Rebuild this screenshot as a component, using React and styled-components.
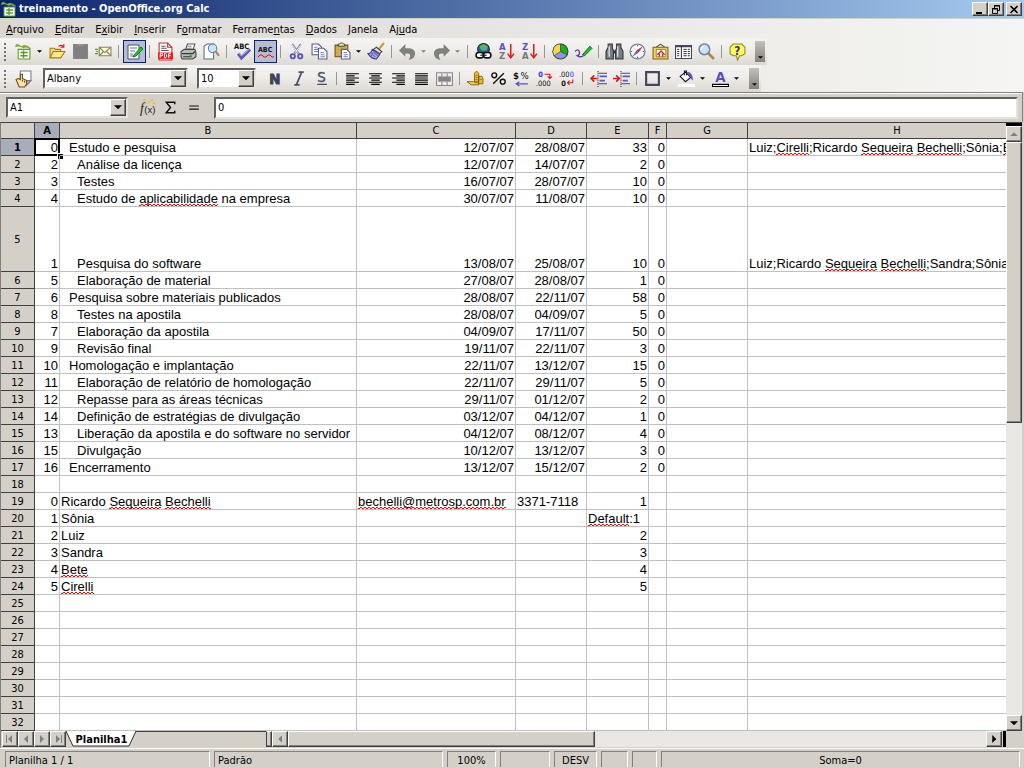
import { Fragment } from "react";
import styled, { createGlobalStyle, css } from "styled-components";

const GlobalStyle = createGlobalStyle`
  *, *::before, *::after {
    box-sizing: border-box;
  }

  body {
    margin: 0;
    background: #d4d0c8;
    color: #000;
    font-family: "DejaVu Sans Condensed", "DejaVu Sans", sans-serif;
    font-size: 11px;
  }

  button, input, select {
    font: inherit;
    color: inherit;
    margin: 0;
    padding: 0;
    border: 0;
    border-radius: 0;
    background: none;
    outline: none;
  }
`;

const raised = css`
  background: #d4d0c8;
  border: 1px solid;
  border-color: #fff #404040 #404040 #fff;
  box-shadow: inset -1px -1px 0 #808080;
`;

const sunken = css`
  background: #fff;
  border: 2px solid;
  border-color: #606060 #e4e2dc #e4e2dc #606060;
`;

const Window = styled.div`
  display: flex;
  flex-direction: column;
  height: 100vh;
  overflow: hidden;
`;

const TitleBar = styled.header`
  display: flex;
  align-items: center;
  flex: none;
  height: 18px;
  padding: 0 2px 0 1px;
  background: linear-gradient(90deg, #0a246a, #a6caf0);

  h1 {
    flex: 1;
    margin: 0 0 0 2px;
    color: #fff;
    font-size: 11px;
    line-height: 18px;
    font-weight: 700;
  }
`;

const CaptionButton = styled.button`
  ${raised}
  display: flex;
  align-items: center;
  justify-content: center;
  width: 16px;
  height: 14px;
  margin-left: ${(p) => (p.$apart ? "2px" : "0")};
`;

const Dock = styled.div`
  flex: none;
  border-top: 1px solid #d4d0c8;
  background: linear-gradient(90deg, #dad7d0, #f5f5f3);
`;

const MenuBar = styled.nav`
  display: flex;
  gap: 11px;
  height: 19px;
  padding-left: 6px;
  line-height: 21px;

  a {
    color: #000;
    text-decoration: none;
  }
`;

const ToolbarRow = styled.div`
  display: flex;
`;

const Toolbar = styled.div`
  display: flex;
  align-items: center;
  height: 27px;
  padding-right: 2px;
  background: linear-gradient(#f6f4f3, #f0eeec 40%, #dcd9d3);
`;

const Grip = styled.span`
  width: 2px;
  height: 18px;
  margin: 0 6px 0 4px;
  background: repeating-linear-gradient(#77746e 0 2px, transparent 2px 4px);
`;

const ToolButton = styled.button`
  display: flex;
  align-items: center;
  justify-content: center;
  width: 23px;
  height: 23px;
  ${(p) =>
    p.$active &&
    css`
      background: #b6bdd2;
      border: 1px solid #0a246a;
    `}

  svg {
    flex: none;
    overflow: visible;
  }
`;

const DropButton = styled.button`
  display: flex;
  align-items: center;
  width: 11px;
  height: 23px;
  padding-left: 2px;
  color: ${(p) => (p.$muted ? "#808080" : "#000")};
`;

const Separator = styled.span`
  width: 1px;
  height: 13px;
  margin: 0 4px 0 3px;
  background: #9a9790;
`;

const Overflow = styled.button`
  display: flex;
  align-items: flex-end;
  justify-content: center;
  width: 10px;
  height: 21px;
  margin-left: 6px;
  padding-bottom: 3px;
  background: linear-gradient(#c4c1bb, #85827d);
`;

const Combo = styled.div`
  ${sunken}
  display: flex;
  width: ${(p) => p.$width};
  height: 21px;
  margin: ${(p) => p.$margin || "0"};

  select,
  input {
    flex: 1;
    min-width: 0;
    padding-left: 2px;
    appearance: none;
  }
`;

const ComboArrow = styled.button`
  ${raised}
  display: flex;
  align-items: center;
  justify-content: center;
  width: 16px;
`;

const FormulaBar = styled.div`
  display: flex;
  align-items: center;
  flex: none;
  height: 30px;
  margin-right: 1px;
  padding: 0 4px 0 6px;
  border-top: 1px solid #808080;
  border-right: 1px solid #808080;
  box-shadow: inset 0 1px 0 #fff;
`;

const FormulaTools = styled.div`
  display: flex;
  margin: 0 9px 0 8px;
`;

const FormulaInput = styled.input`
  ${sunken}
  flex: 1;
  min-width: 0;
  height: 22px;
  padding-left: 2px;
`;

const SheetArea = styled.main`
  display: flex;
  flex: 1;
  min-height: 0;
  margin-right: 2px;
  border-top: 1px solid #404040;
  border-left: 1px solid #808080;
`;

const GridPane = styled.div`
  flex: 1;
  min-width: 0;
  overflow: hidden;
  background: #fff;
`;

const Grid = styled.table`
  width: 100%;
  min-width: 1046px;
  table-layout: fixed;
  border-collapse: separate;
  border-spacing: 0;
`;

const HeaderCell = styled.th`
  height: ${(p) => p.$height || "17px"};
  padding: 0;
  border-right: 1px solid #404040;
  border-bottom: 1px solid #404040;
  background: ${(p) => (p.$active ? "#a8adb9" : "#d4d0c8")};
  font-weight: ${(p) => (p.$active ? 700 : 400)};
  line-height: 15px;
  text-align: center;
`;

const Cell = styled.td`
  position: relative;
  height: 17px;
  padding: 0 1px 0 ${(p) => 1 + (p.$indent || 0) * 8}px;
  border-right: 1px solid #c0c0c0;
  border-bottom: 1px solid #c0c0c0;
  font-family: "Liberation Sans", Arial, sans-serif;
  font-size: 13px;
  line-height: 14px;
  text-align: ${(p) => (p.$right ? "right" : "left")};
  vertical-align: bottom;
  white-space: nowrap;
`;

const Cursor = styled.span`
  position: absolute;
  inset: -1px;
  border: 2px solid #000;

  &::after {
    content: "";
    position: absolute;
    right: -5px;
    bottom: -5px;
    width: 6px;
    height: 6px;
    border: 1px solid #fff;
    border-width: 1px 0 0 1px;
    background: #000;
  }
`;

const Misspelt = styled.span`
  background:
    linear-gradient(90deg, #f00 50%, transparent 50%) 0 100% / 4px 1px repeat-x,
    linear-gradient(90deg, transparent 50%, #f00 50%) 0 calc(100% - 1px) / 4px 1px repeat-x;
`;

const VerticalScroll = styled.div`
  display: flex;
  flex-direction: column;
  width: 16px;
  border-top: 3px solid #000;
  background: #e8e7e3;
`;

const HorizontalScroll = styled.div`
  display: flex;
  flex: 1;
  background: #e8e7e3;
`;

const ScrollButton = styled.button`
  ${raised}
  display: flex;
  flex: none;
  align-items: center;
  justify-content: center;
  width: 16px;
  height: 16px;
  color: ${(p) => (p.$muted ? "#808080" : "#000")};
`;

const Track = styled.div`
  display: flex;
  flex: 1;
  flex-direction: ${(p) => (p.$vertical ? "column" : "row")};
  min-height: 0;
`;

const Thumb = styled.div`
  ${raised}
  flex: 0 0 ${(p) => p.$size};
`;

const SheetBar = styled.div`
  display: flex;
  flex: none;
  height: 17px;
  padding-left: 1px;
  margin-right: 2px;
  border-left: 1px solid #808080;
  border-bottom: 1px solid #d4d0c8;
`;

const TabStrip = styled.div`
  display: flex;
  width: 200px;
  border-top: 1px solid #404040;
`;

const SheetTab = styled.button`
  position: relative;
  height: 16px;
  width: 71px;
  margin-top: -1px;
  font-weight: 700;
  line-height: 15px;
  text-align: center;

  svg {
    position: absolute;
    inset: 0;
  }

  span {
    position: relative;
  }
`;

const Splitter = styled.div`
  ${raised}
  width: 6px;
  border-left-color: #404040;
`;

const EndStop = styled.div`
  width: 3px;
  margin-left: 1px;
  background: #000;
`;

const Corner = styled.div`
  width: 16px;
  background: #d4d0c8;
`;

const StatusBar = styled.footer`
  display: flex;
  flex: none;
  gap: 4px;
  height: 20px;
  padding: 2px 4px 1px 5px;
  border-top: 1px solid #fff;
`;

const StatusPanel = styled.div`
  flex: ${(p) => (p.$width ? `0 0 ${p.$width}` : "1")};
  padding: 0 3px;
  border-top: 1px solid #808080;
  border-left: 1px solid #808080;
  border-right: 1px solid #fff;
  line-height: 17px;
  text-align: ${(p) => (p.$center ? "center" : "left")};
`;

const Icon = ({ children, size = 17 }) => (
  <svg width={size} height={size} viewBox="0 0 16 16" fill="none" aria-hidden="true">
    {children}
  </svg>
);

const Arrow = ({ dir = "down", size = 5 }) => {
  const points = {
    down: "0,0 6,0 3,3",
    up: "0,3 6,3 3,0",
    left: "3,0 3,6 0,3",
    right: "0,0 0,6 3,3",
  }[dir];
  const tall = dir === "left" || dir === "right";
  return (
    <svg
      width={tall ? (size + 1) / 2 : size}
      height={tall ? size : (size + 1) / 2}
      viewBox={tall ? "0 0 3 6" : "0 0 6 3"}
      aria-hidden="true"
    >
      <polygon points={points} fill="currentColor" />
    </svg>
  );
};

const iconText = {
  fontFamily: "DejaVu Sans Condensed, DejaVu Sans, sans-serif",
  fontWeight: 700,
};

const CalcLogo = () => (
  <>
    <path d="M1 1q3 0 5 2q4-3 9 2l-1 1q-3-3-6-1q-4-3-8-1z" fill="#7fae3c" />
    <path d="M3 6h11v9H3z" fill="#fff" stroke="#5c9c2c" />
    <path d="M5 9h7M5 12h7M8 7v7" stroke="#5c9c2c" strokeWidth="1.4" />
  </>
);

const icons = {
  new: <CalcLogo />,
  open: (
    <>
      <path d="M1 14V5h4l1 1h5v2" fill="#f5d77a" stroke="#a37d14" />
      <path d="M1 14l3-6h11l-4 6z" fill="#ffe88d" stroke="#a37d14" />
      <path d="M9 3q3-2 5 1m0-3v3h-3" stroke="#d62020" />
    </>
  ),
  save: (
    <>
      <path d="M1 1h14v14H1z" fill="#808080" />
      <path d="M5 2h6" stroke="#a5a5a5" />
    </>
  ),
  mail: (
    <>
      <path d="M4 4h11v8H4z" fill="#fffbd0" stroke="#87835d" />
      <path d="M4 4l5 5 6-5M4 12l4-4M15 12l-4-4" stroke="#87835d" />
      <path d="M0 6h3M1 8h2M0 10h3" stroke="#5b983b" />
    </>
  ),
  edit: (
    <>
      <path d="M1 1h11v14H1z" fill="#fff" stroke="#47506f" />
      <path d="M3 4h7M3 7h5M3 10h3M3 12h4" stroke="#6870b0" />
      <path d="M7 11l7-8 2 2-7 7-3 1z" fill="#20d020" stroke="#145414" strokeWidth=".8" />
    </>
  ),
  pdf: (
    <>
      <path d="M2 0h8l4 4v12H2z" fill="#fff" stroke="#c03030" />
      <path d="M10 0v4h4" stroke="#c03030" />
      <path d="M4 3h4M4 5h5M4 7h7" stroke="#555" />
      <path d="M1 9h14v6H1z" fill="#e81818" />
      <path d="M3 14v-4h2v2H3M7 10v4h1l1-1v-2l-1-1zM11 14v-4h2M11 12h2" stroke="#fff" strokeWidth=".9" />
    </>
  ),
  print: (
    <>
      <path d="M5 7l2-6h7l-2 6z" fill="#fff" stroke="#555" />
      <path d="M1 8l3-2h10l1 3v4l-3 2H2l-1-2z" fill="#bbb" stroke="#444" />
      <path d="M2 10h10l2-2M3 13h8" stroke="#333" />
      <path d="M7 3h4M6 5h5" stroke="#888" />
      <path d="M9 12h2" stroke="#18c018" strokeWidth="1.5" />
    </>
  ),
  preview: (
    <>
      <path d="M1 3l3-2h6v14H1z" fill="#fff" stroke="#666b88" />
      <circle cx="9" cy="5" r="4" fill="#c5e7fa" stroke="#6775a0" />
      <path d="M12 8l3 4" stroke="#b68452" strokeWidth="2" />
    </>
  ),
  spell: (
    <>
      <text x="0" y="6" fontSize="7" fill="#111" style={iconText}>ABC</text>
      <path d="M4 10l3 4 8-8" stroke="#5a50c8" strokeWidth="3" />
      <path d="M5 10l2 2 7-6" stroke="#a9a6ee" />
    </>
  ),
  autoSpell: (
    <>
      <text x="0" y="8" fontSize="7" fill="#111" style={iconText}>ABC</text>
      <path d="M0 13l2-2h2l2 2h2l2-2h2l2 2h2" stroke="#f00" />
    </>
  ),
  cut: (
    <>
      <path d="M4 1l6 9M12 1l-6 9" stroke="#8c8ca8" strokeWidth="2" />
      <path d="M4 2l5 7M12 2l-5 7" stroke="#fff" strokeWidth=".8" />
      <circle cx="4.5" cy="12.5" r="2" stroke="#5a50c0" strokeWidth="1.8" />
      <circle cx="11.5" cy="12.5" r="2" stroke="#5a50c0" strokeWidth="1.8" />
    </>
  ),
  copy: (
    <>
      <path d="M1 1h6l3 3v7H1z" fill="#fff" stroke="#555c88" />
      <path d="M3 4h3M3 6h5M3 8h5" stroke="#7477c8" />
      <path d="M7 5h5l3 3v7H7z" fill="#fff" stroke="#555c88" />
      <path d="M9 9h3M9 11h4M9 13h4" stroke="#7477c8" />
    </>
  ),
  paste: (
    <>
      <path d="M1 2h12v11H1z" fill="#d2ab4f" stroke="#6b5015" />
      <path d="M4 3V1h1l1-1h2l1 1h1v2z" fill="#ece7a2" stroke="#333" strokeWidth=".8" />
      <path d="M7 6h5l3 3v6H7z" fill="#fff" stroke="#555c88" />
      <path d="M9 9h3M9 11h4M9 13h4" stroke="#7477c8" />
    </>
  ),
  brush: (
    <>
      <path d="M10 6l5-6" stroke="#d39a29" strokeWidth="2" />
      <path d="M8 4l5 4-2 2-6-4z" fill="#ddd" stroke="#444" />
      <path d="M4 6l7 5-3 4q-5 0-8-5 3 0 4-4z" fill="#aaaaf4" stroke="#404088" />
      <path d="M3 10l4 3M5 8l4 4M5 9l-2 3" stroke="#6565c0" />
    </>
  ),
  undo: <path d="M0 7l6-6v4h4q6 1 5 6-1 4-6 5l1-2q2-5-4-4v3z" fill="#808080" />,
  redo: <path d="M16 7l-6-6v4H6Q0 6 1 11q1 4 6 5l-1-2q-2-5 4-4v3z" fill="#808080" />,
  link: (
    <>
      <circle cx="8" cy="6" r="5.5" fill="#3a52b4" stroke="#223" />
      <path d="M4 3l4-2 4 2-1 4-5 0z" fill="#49bd59" />
      <rect x="1" y="9" width="7" height="5" rx="2.5" fill="#fff" stroke="#111" strokeWidth="1.5" />
      <rect x="8" y="9" width="7" height="5" rx="2.5" fill="#fff" stroke="#111" strokeWidth="1.5" />
      <path d="M5 11.5h6" stroke="#111" />
    </>
  ),
  sortAz: (
    <>
      <text x="1" y="7" fontSize="9" fill="#5a50c0" style={iconText}>A</text>
      <text x="1" y="15" fontSize="9" fill="#777" style={iconText}>Z</text>
      <path d="M12 1v12M9 10l3 4 3-4" stroke="#e01818" strokeWidth="1.4" />
    </>
  ),
  sortZa: (
    <>
      <text x="1" y="7" fontSize="9" fill="#5a50c0" style={iconText}>Z</text>
      <text x="1" y="15" fontSize="9" fill="#777" style={iconText}>A</text>
      <path d="M12 1v12M9 10l3 4 3-4" stroke="#e01818" strokeWidth="1.4" />
    </>
  ),
  chart: (
    <>
      <circle cx="8" cy="8" r="7" fill="#8795f0" stroke="#444" />
      <path d="M8 8V1a7 7 0 0 1 6 10z" fill="#12b512" stroke="#444" strokeWidth=".7" />
      <path d="M8 8V1a7 7 0 0 0-6 11z" fill="#f8d84a" stroke="#444" strokeWidth=".7" />
    </>
  ),
  draw: (
    <>
      <path d="M0 8q3-3 4 0t-2 4q3 2 6 0" stroke="#6040a8" strokeWidth="1.3" />
      <path d="M7 11l7-8 2 2-7 7z" fill="#18c828" stroke="#104810" strokeWidth=".8" />
    </>
  ),
  find: (
    <>
      <path d="M2 1h4v4l1 2v8H0V8l2-4zM10 1h4v3l2 4v7H9V7l1-2z" fill="#777b85" stroke="#33363d" />
      <path d="M7 7h2v3H7z" fill="#33363d" />
      <path d="M3 3v10M11 3v10" stroke="#dadde4" strokeWidth="1.3" />
    </>
  ),
  compass: (
    <>
      <circle cx="8" cy="8" r="7" fill="#f4f6fb" stroke="#7c8298" strokeWidth="1.2" />
      <path d="M13 3L7 7l2 2z" fill="#e02020" />
      <path d="M3 13l6-4-2-2z" fill="#4c63cf" />
      <path d="M8 2v1M8 13v1M2 8h1M13 8h1" stroke="#555" />
    </>
  ),
  gallery: (
    <>
      <path d="M4 4l4-3 4 3" stroke="#555" />
      <path d="M1 4h14v11H1z" fill="#f4d65a" stroke="#796015" />
      <path d="M4 6h9v7H4z" fill="#fff" stroke="#796015" strokeWidth=".7" />
      <path d="M5 11l3.5-3.500 3.500 3.500M7 10v3M10 10v3" stroke="#d02020" strokeWidth="1.2" />
    </>
  ),
  sources: (
    <>
      <path d="M.5 2.500h15v12H.5z" fill="#fff" stroke="#41465a" />
      <path d="M0 3h16" stroke="#41465a" strokeWidth="2" />
      <path d="M6 3v11M2 6h2M2 8h2M2 10h2M2 12h2M8 6h3M12 6h2M8 8h3M12 8h2M8 10h3M12 10h2M8 12h3M12 12h2" stroke="#222" strokeWidth=".9" />
    </>
  ),
  zoom: (
    <>
      <path d="M9 9l6 6" stroke="#b9844c" strokeWidth="2.5" />
      <circle cx="6" cy="6" r="5" fill="#c8e5fa" stroke="#7180ac" strokeWidth="1.4" />
      <path d="M3 6q0-3 3-3" stroke="#fff" />
    </>
  ),
  help: (
    <>
      <path d="M4 1h8l3 3v6l-3 2h-2l-2 4-1-4H4l-3-2V4z" fill="#fff858" stroke="#918c18" />
      <text x="5" y="11" fontSize="11" fill="#3030a0" style={iconText}>?</text>
    </>
  ),
  styles: (
    <>
      <path d="M5 1h10v9l-4 4H5z" fill="#fff" stroke="#777b88" />
      <path d="M11 14v-4h4z" fill="#c2c5d2" stroke="#777b88" />
      <path d="M1 9l2-1 2 1V4h2v4l4 2v3l-2 3H4z" fill="#ffe3ac" stroke="#6b4b10" />
      <path d="M7 9v2M9 10v2" stroke="#6b4b10" />
    </>
  ),
  bold: (
    <text x="2" y="13" fontSize="14" fill="#3c4258" stroke="#3c4258" strokeWidth=".8" style={iconText}>
      N
    </text>
  ),
  italic: <path d="M8 2h5M4 14h5M11 2L6 14" stroke="#4c526a" strokeWidth="1.6" />,
  underline: (
    <>
      <text x="4" y="11" fontSize="14" fill="#4c526a" stroke="#4c526a" strokeWidth=".4" style={{ ...iconText, fontWeight: 400 }}>
        S
      </text>
      <path d="M4 13.500h9" stroke="#4c526a" strokeWidth="1.2" />
    </>
  ),
  left: <path d="M2 3.500h12M2 5.500h8M2 7.500h12M2 9.500h8M2 11.500h12M2 13.500h8" stroke="#000" />,
  center: <path d="M2 3.500h12M4 5.500h8M2 7.500h12M4 9.500h8M2 11.500h12M4 13.500h8" stroke="#000" />,
  right: <path d="M2 3.500h12M6 5.500h8M2 7.500h12M6 9.500h8M2 11.500h12M6 13.500h8" stroke="#000" />,
  justify: <path d="M2 3.500h12M2 5.500h12M2 7.500h12M2 9.500h12M2 11.500h12M2 13.500h12" stroke="#000" />,
  merge: (
    <>
      <path d="M.5 2.500h15v12H.5z" fill="#eee" stroke="#888" />
      <path d="M2 6h12v5H2z" fill="#858585" />
      <path d="M5.500 3v3M10.500 3v3M5.500 11v3M10.500 11v3" stroke="#888" />
    </>
  ),
  currency: (
    <>
      <path d="M7 3l2-2 2 2v8H7zM11 6h3l1 2v5h-4z" fill="#f5bf20" stroke="#745509" strokeWidth=".8" />
      <path d="M0 11h6l2 1h3v2H4z" fill="#f8d34b" stroke="#745509" strokeWidth=".8" />
      <path d="M8 5h2M8 7h2M8 9h2M12 9h2" stroke="#745509" strokeWidth=".6" />
    </>
  ),
  percent: (
    <>
      <circle cx="4" cy="5" r="2.3" stroke="#111" strokeWidth="1.3" />
      <circle cx="12" cy="11" r="2.3" stroke="#111" strokeWidth="1.3" />
      <path d="M13 3L3 13" stroke="#111" strokeWidth="1.3" />
    </>
  ),
  standard: (
    <>
      <text x="0" y="8" fontSize="9" fill="#111" style={iconText}>$</text>
      <text x="7" y="8" fontSize="9" fill="#111" style={{ ...iconText, fontWeight: 400 }}>%</text>
      <path d="M14 13H3m3-2l-3 2 3 2" stroke="#5a50c0" strokeWidth="1.2" />
    </>
  ),
  addDecimal: (
    <>
      <text x="2" y="7" fontSize="7" fill="#2c2cff" style={iconText}>0</text>
      <path d="M8 4h5v3M11 6l2 2 2-2" stroke="#d01818" />
      <text x="0" y="15" fontSize="7" fill="#111" style={{ ...iconText, fontWeight: 400 }}>.000</text>
    </>
  ),
  dropDecimal: (
    <>
      <text x="0" y="7" fontSize="7" fill="#111" style={{ ...iconText, fontWeight: 400 }}>
        .00<tspan fill="#2c2cff">0</tspan>
      </text>
      <text x="2" y="15" fontSize="7" fill="#111" style={iconText}>0</text>
      <path d="M13 9v3H8M10 10l-2 2 2 2" stroke="#d01818" />
    </>
  ),
  outdent: (
    <>
      <path d="M8 3h8M8 13h8" stroke="#454a60" />
      <path d="M9 6h7M9 10h5" stroke="#5a58c8" strokeWidth="1.8" />
      <path d="M7.500 1v15" stroke="#333" strokeDasharray="1 1" />
      <path d="M7 8H1m3-3L1 8l3 3" stroke="#e01818" strokeWidth="1.5" />
    </>
  ),
  indent: (
    <>
      <path d="M8 3h8M8 13h8" stroke="#454a60" />
      <path d="M9 6h7M9 10h5" stroke="#5a58c8" strokeWidth="1.8" />
      <path d="M7.500 1v15" stroke="#333" strokeDasharray="1 1" />
      <path d="M0 8h6M3 5l3 3-3 3" stroke="#e01818" strokeWidth="1.5" />
    </>
  ),
  border: <path d="M2 2h12v12H2z" stroke="#424860" strokeWidth="2" />,
  fill: (
    <>
      <path d="M2 6l5-4 5 5-5 4z" fill="#fff" stroke="#111" />
      <path d="M6 5V1h2v4" stroke="#111" />
      <path d="M8 2q6-1 6 8-2-1-2-3" fill="#5a58c8" />
      <path d="M0 13h16v3H0z" fill="#fff" />
    </>
  ),
  fontColor: (
    <>
      <text x="3" y="11" fontSize="14" fill="#5a50c0" style={iconText}>A</text>
      <path d="M.5 13.500h15v2H.5z" fill="#fff" stroke="#000" />
    </>
  ),
};

// "|" is a separator, drop adds the small arrow beside the button
const standardTools = [
  { icon: "new", label: "Novo", drop: true },
  { icon: "open", label: "Abrir" },
  { icon: "save", label: "Salvar" },
  { icon: "mail", label: "E-mail" },
  "|",
  { icon: "edit", label: "Editar arquivo", active: true },
  "|",
  { icon: "pdf", label: "Exportar como PDF" },
  { icon: "print", label: "Imprimir" },
  { icon: "preview", label: "Visualizar página" },
  "|",
  { icon: "spell", label: "Verificação ortográfica" },
  { icon: "autoSpell", label: "Autoverificação", active: true },
  "|",
  { icon: "cut", label: "Cortar" },
  { icon: "copy", label: "Copiar" },
  { icon: "paste", label: "Colar", drop: true },
  { icon: "brush", label: "Pincel de estilo" },
  "|",
  { icon: "undo", label: "Desfazer", drop: true, muted: true },
  { icon: "redo", label: "Refazer", drop: true, muted: true },
  "|",
  { icon: "link", label: "Hyperlink" },
  { icon: "sortAz", label: "Ordem crescente" },
  { icon: "sortZa", label: "Ordem decrescente" },
  "|",
  { icon: "chart", label: "Gráfico" },
  { icon: "draw", label: "Desenho" },
  "|",
  { icon: "find", label: "Localizar" },
  { icon: "compass", label: "Navegador" },
  { icon: "gallery", label: "Galeria" },
  { icon: "sources", label: "Fontes de dados" },
  { icon: "zoom", label: "Zoom" },
  "|",
  { icon: "help", label: "Ajuda" },
];

const formatTools = [
  { icon: "bold", label: "Negrito" },
  { icon: "italic", label: "Itálico" },
  { icon: "underline", label: "Sublinhado" },
  "|",
  { icon: "left", label: "Alinhar à esquerda" },
  { icon: "center", label: "Centralizar" },
  { icon: "right", label: "Alinhar à direita" },
  { icon: "justify", label: "Justificar" },
  { icon: "merge", label: "Mesclar células" },
  "|",
  { icon: "currency", label: "Moeda" },
  { icon: "percent", label: "Porcentagem" },
  { icon: "standard", label: "Formato padrão" },
  { icon: "addDecimal", label: "Adicionar casa decimal" },
  { icon: "dropDecimal", label: "Excluir casa decimal" },
  "|",
  { icon: "outdent", label: "Diminuir recuo" },
  { icon: "indent", label: "Aumentar recuo" },
  "|",
  { icon: "border", label: "Bordas", drop: true },
  { icon: "fill", label: "Cor do plano de fundo", drop: true },
  { icon: "fontColor", label: "Cor da fonte", drop: true },
];

const menus = [
  ["", "A", "rquivo"],
  ["", "E", "ditar"],
  ["E", "x", "ibir"],
  ["", "I", "nserir"],
  ["F", "o", "rmatar"],
  ["Ferrame", "n", "tas"],
  ["", "D", "ados"],
  ["", "J", "anela"],
  ["Aj", "u", "da"],
];

const columns = [
  ["A", 25],
  ["B", 297],
  ["C", 159],
  ["D", 71],
  ["E", 62],
  ["F", 18],
  ["G", 81],
  ["H"],
];

const ROW_COUNT = 32;

// task rows: id, indent, name, start, end, days, done, people
const tasks = [
  ["0", 1, "Estudo e pesquisa", "12/07/07", "28/08/07", "33", "0", "Luiz;*Cirelli*;Ricardo *Sequeira* *Bechelli*;Sônia;*Bete*"],
  ["2", 2, "Análise da licença", "12/07/07", "14/07/07", "2", "0"],
  ["3", 2, "Testes", "16/07/07", "28/07/07", "10", "0"],
  ["4", 2, "Estudo de *aplicabilidade* na empresa", "30/07/07", "11/08/07", "10", "0"],
  ["1", 2, "Pesquisa do software", "13/08/07", "25/08/07", "10", "0", "Luiz;Ricardo *Sequeira* *Bechelli*;Sandra;Sônia"],
  ["5", 2, "Elaboração de material", "27/08/07", "28/08/07", "1", "0"],
  ["6", 1, "Pesquisa sobre materiais publicados", "28/08/07", "22/11/07", "58", "0"],
  ["8", 2, "Testes na apostila", "28/08/07", "04/09/07", "5", "0"],
  ["7", 2, "Elaboração da apostila", "04/09/07", "17/11/07", "50", "0"],
  ["9", 2, "Revisão final", "19/11/07", "22/11/07", "3", "0"],
  ["10", 1, "Homologação e implantação", "22/11/07", "13/12/07", "15", "0"],
  ["11", 2, "Elaboração de relatório de homologação", "22/11/07", "29/11/07", "5", "0"],
  ["12", 2, "Repasse para as áreas técnicas", "29/11/07", "01/12/07", "2", "0"],
  ["14", 2, "Definição de estratégias de divulgação", "03/12/07", "04/12/07", "1", "0"],
  ["13", 2, "Liberação da apostila e do software no servidor", "04/12/07", "08/12/07", "4", "0"],
  ["15", 2, "Divulgação", "10/12/07", "13/12/07", "3", "0"],
  ["16", 1, "Encerramento", "13/12/07", "15/12/07", "2", "0"],
];

const people = [
  ["0", "Ricardo *Sequeira* *Bechelli*", "*bechelli@metrosp.com.br*", "3371-7118", "1"],
  ["1", "Sônia", "", "", "*Default*:1"],
  ["2", "Luiz", "", "", "2"],
  ["3", "Sandra", "", "", "3"],
  ["4", "*Bete*", "", "", "4"],
  ["5", "*Cirelli*", "", "", "5"],
];

const right = (text) => ({ text, right: true });

const rowCells = (row) => {
  if (row <= tasks.length) {
    const [id, indent, name, start, end, days, done, team] = tasks[row - 1];
    return [right(id), { text: name, indent }, right(start), right(end), right(days), right(done), {}, { text: team }];
  }
  const person = people[row - 19];
  if (person) {
    const [id, name, email, phone, value] = person;
    return [
      right(id),
      { text: name },
      { text: email },
      { text: phone },
      { text: value, right: !value.includes(":") },
      {},
      {},
      {},
    ];
  }
  return columns.map(() => ({}));
};

// words between asterisks get the red spelling underline
const renderText = (text = "") =>
  text.split("*").map((part, i) => (i % 2 ? <Misspelt key={i}>{part}</Misspelt> : part));

const Tools = ({ items }) =>
  items.map((tool, i) => {
    if (tool === "|") return <Separator key={i} />;
    return (
      <Fragment key={i}>
        <ToolButton type="button" aria-label={tool.label} $active={tool.active}>
          <Icon size={tool.active ? 16 : 17}>{icons[tool.icon]}</Icon>
        </ToolButton>
        {tool.drop && (
          <DropButton type="button" aria-label={`${tool.label}: opções`} $muted={tool.muted}>
            <Arrow />
          </DropButton>
        )}
      </Fragment>
    );
  });

const SelectCombo = ({ label, value, width, margin }) => (
  <Combo $width={width} $margin={margin}>
    <select aria-label={label} defaultValue={value}>
      <option>{value}</option>
    </select>
    <ComboArrow type="button" aria-label={`Abrir ${label}`}>
      <Arrow size={8} />
    </ComboArrow>
  </Combo>
);

const Sheet = () => (
  <Grid>
    <colgroup>
      <col width={34} />
      {columns.map(([name, width]) => (
        <col key={name} width={width} />
      ))}
    </colgroup>
    <thead>
      <tr>
        <HeaderCell $height="16px" />
        {columns.map(([name]) => (
          <HeaderCell key={name} scope="col" $height="16px" $active={name === "A"}>
            {name}
          </HeaderCell>
        ))}
      </tr>
    </thead>
    <tbody>
      {Array.from({ length: ROW_COUNT }, (_, i) => i + 1).map((row) => (
        <tr key={row}>
          <HeaderCell scope="row" $height={row === 5 ? "65px" : "17px"} $active={row === 1}>
            {row}
          </HeaderCell>
          {rowCells(row).map((cell, i) => (
            <Cell key={i} $right={cell.right} $indent={cell.indent}>
              {renderText(cell.text)}
              {row === 1 && i === 0 && <Cursor />}
            </Cell>
          ))}
        </tr>
      ))}
    </tbody>
  </Grid>
);

const NavIcon = ({ dir, bar }) => (
  <svg width="8" height="8" viewBox="0 0 8 8" fill="currentColor" aria-hidden="true">
    <path d={dir === "left" ? "M6 0v8L2 4z" : "M2 0v8l4-4z"} />
    {bar && <path d={dir === "left" ? "M0 0h1v8H0z" : "M7 0h1v8H7z"} />}
  </svg>
);

const App = () => {
  return (
    <Window>
      <GlobalStyle />
      <TitleBar>
        <Icon size={16}>
          <CalcLogo />
        </Icon>
        <h1>treinamento - OpenOffice.org Calc</h1>
        <CaptionButton type="button" aria-label="Minimizar">
          <svg width="10" height="9" aria-hidden="true">
            <path d="M1 7h6v2H1z" />
          </svg>
        </CaptionButton>
        <CaptionButton type="button" aria-label="Restaurar">
          <svg width="10" height="9" fill="none" stroke="#000" aria-hidden="true">
            <path d="M3.500 3V.5h5v5H7M3 1h6M1.500 3.500h5v5h-5zM1 4h6" />
          </svg>
        </CaptionButton>
        <CaptionButton type="button" aria-label="Fechar" $apart>
          <svg width="10" height="9" stroke="#000" strokeWidth="1.6" aria-hidden="true">
            <path d="M1.500 1l7 7M8.500 1l-7 7" />
          </svg>
        </CaptionButton>
      </TitleBar>

      <Dock>
        <MenuBar>
          {menus.map(([before, key, after]) => (
            <a key={before + key + after} href="#menu">
              {before}
              <u>{key}</u>
              {after}
            </a>
          ))}
        </MenuBar>
        <ToolbarRow>
          <Toolbar role="toolbar" aria-label="Padrão">
            <Grip />
            <Tools items={standardTools} />
            <Overflow type="button" aria-label="Mais botões">
              <Arrow />
            </Overflow>
          </Toolbar>
        </ToolbarRow>
        <ToolbarRow>
          <Toolbar role="toolbar" aria-label="Formatação">
            <Grip />
            <ToolButton type="button" aria-label="Estilos e formatação">
              <Icon>{icons.styles}</Icon>
            </ToolButton>
            <SelectCombo label="Nome da fonte" value="Albany" width="145px" margin="0 9px 0 8px" />
            <SelectCombo label="Tamanho da fonte" value="10" width="59px" margin="0 8px 0 0" />
            <Tools items={formatTools} />
            <Overflow type="button" aria-label="Mais botões">
              <Arrow />
            </Overflow>
          </Toolbar>
        </ToolbarRow>
      </Dock>

      <FormulaBar>
        <Combo $width="122px">
          <input aria-label="Caixa de nome" defaultValue="A1" />
          <ComboArrow type="button" aria-label="Abrir caixa de nome">
            <Arrow size={8} />
          </ComboArrow>
        </Combo>
        <FormulaTools>
          <ToolButton type="button" aria-label="Assistente de funções">
            <Icon>
              <text x="1" y="13" fontSize="13" fill="#222" fontFamily="Liberation Serif, serif" fontStyle="italic">
                f
              </text>
              <text x="5" y="13" fontSize="9" fill="#222" fontFamily="Liberation Sans, sans-serif">
                (x)
              </text>
              <path d="M4 1h2M8 3h2M11 1h2M13 4h2" stroke="#f0c020" strokeWidth="2" />
            </Icon>
          </ToolButton>
          <ToolButton type="button" aria-label="Soma">
            <Icon>
              <path d="M12 5V3H4l4 5-4 5h8v-2" stroke="#111" strokeWidth="1.4" />
            </Icon>
          </ToolButton>
          <ToolButton type="button" aria-label="Função">
            <Icon>
              <path d="M4 6.500h9M4 9.500h9" stroke="#111" />
            </Icon>
          </ToolButton>
        </FormulaTools>
        <FormulaInput aria-label="Linha de entrada" defaultValue="0" />
      </FormulaBar>

      <SheetArea>
        <GridPane>
          <Sheet />
        </GridPane>
        <VerticalScroll>
          <ScrollButton type="button" aria-label="Rolar para cima" $muted>
            <Arrow dir="up" size={8} />
          </ScrollButton>
          <Track $vertical>
            <Thumb $size="49%" />
          </Track>
          <ScrollButton type="button" aria-label="Rolar para baixo">
            <Arrow size={8} />
          </ScrollButton>
        </VerticalScroll>
      </SheetArea>

      <SheetBar>
        <ScrollButton type="button" aria-label="Primeira planilha" $muted>
          <NavIcon dir="left" bar />
        </ScrollButton>
        <ScrollButton type="button" aria-label="Planilha anterior" $muted>
          <NavIcon dir="left" />
        </ScrollButton>
        <ScrollButton type="button" aria-label="Próxima planilha" $muted>
          <NavIcon dir="right" />
        </ScrollButton>
        <ScrollButton type="button" aria-label="Última planilha" $muted>
          <NavIcon dir="right" bar />
        </ScrollButton>
        <TabStrip>
          <SheetTab type="button">
            <svg width="71" height="16" aria-hidden="true">
              <path d="M0 0l7 15h56l7-15z" fill="#fff" />
              <path d="M0 0l7 15h56l7-15" fill="none" stroke="#303030" />
            </svg>
            <span>Planilha1</span>
          </SheetTab>
        </TabStrip>
        <Splitter />
        <HorizontalScroll>
          <ScrollButton type="button" aria-label="Rolar para a esquerda" $muted>
            <Arrow dir="left" size={8} />
          </ScrollButton>
          <Track>
            <Thumb $size="44%" />
          </Track>
          <ScrollButton type="button" aria-label="Rolar para a direita">
            <Arrow dir="right" size={8} />
          </ScrollButton>
        </HorizontalScroll>
        <EndStop />
        <Corner />
      </SheetBar>

      <StatusBar>
        <StatusPanel $width="205px">Planilha 1 / 1</StatusPanel>
        <StatusPanel $width="229px">Padrão</StatusPanel>
        <StatusPanel $width="49px" $center>
          100%
        </StatusPanel>
        <StatusPanel $width="50px" />
        <StatusPanel $width="43px" $center>
          DESV
        </StatusPanel>
        <StatusPanel $width="27px" />
        <StatusPanel $width="25px" />
        <StatusPanel $center>Soma=0</StatusPanel>
      </StatusBar>
    </Window>
  );
};

export default App;
